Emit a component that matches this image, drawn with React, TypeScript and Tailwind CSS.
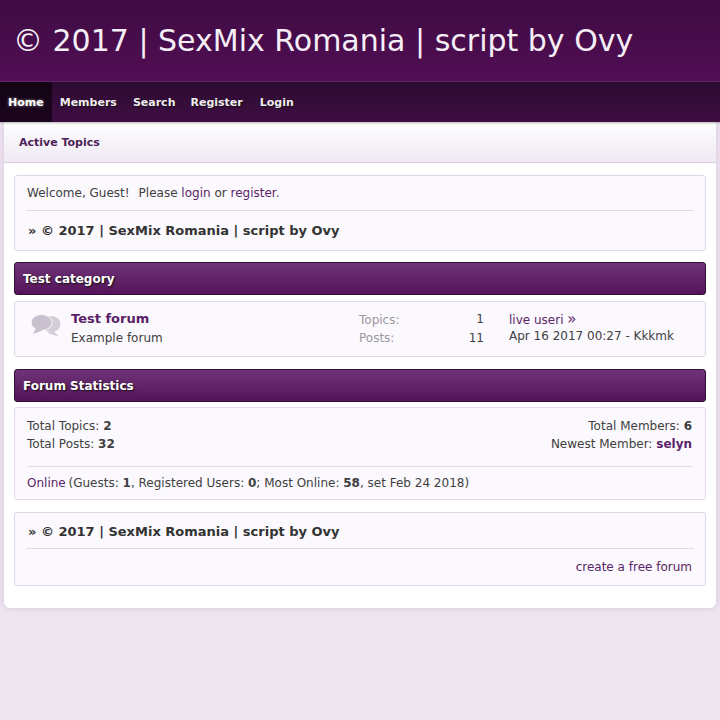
import React from "react";

const font = "[font-family:'DejaVu_Sans',sans-serif]";

function CatBar({ title, className }: { title: string; className: string }) {
  return (
    <div className={`mx-[10px] h-[33px] rounded-[3px] border border-[#2e0f38] bg-gradient-to-b from-[#6f3378] to-[#551358] px-2 flex items-center text-[12px] font-bold text-white [text-shadow:1px_1px_2px_#111] ${className}`}>
      {title}
    </div>
  );
}

function Bubbles() {
  return (
    <svg width="30" height="23" viewBox="0 0 30 23" className="block">
      <ellipse cx="20" cy="10" rx="9.500" ry="8" fill="#d5cdd8" />
      <path d="M22 16l5.500 6.500-11-3.500z" fill="#d5cdd8" />
      <ellipse cx="10.500" cy="8.500" rx="10.500" ry="8" fill="#cac1ce" stroke="#fbf9fd" strokeWidth="1" />
      <path d="M5 14l-3 6 9.500-3.500z" fill="#cac1ce" />
    </svg>
  );
}

export default function App() {
  return (
    <div className={`min-h-[720px] bg-[#efe5f1] text-[12px] text-[#404040] ${font}`}>
      <header className="h-[82px] border-b border-[#5f2a6b] bg-gradient-to-b from-[#3e0c42] to-[#520d55] pl-[13px] pt-[21px]">
        <h1 className="text-[30px] leading-[40px] font-normal text-[#f5eef6]">© 2017 | SexMix Romania | script by Ovy</h1>
      </header>
      <nav className="h-[40px] flex bg-gradient-to-b from-[#2c0a30] to-[#3f0e43] text-[11px] font-bold text-[#f1eaf2] shadow-[0_1px_2px_rgba(0,0,0,0.3)] relative [text-shadow:1px_1px_1px_#111]">
        <a className="px-2 pt-[2px] flex items-center bg-gradient-to-b from-[#120314] to-[#1d0520] text-white [text-shadow:0_0_3px_#999]">Home</a>
        <a className="px-2 pt-[2px] flex items-center">Members</a>
        <a className="px-2 pt-[2px] flex items-center">Search</a>
        <a className="pl-2 pr-[9px] -ml-[1px] pt-[2px] flex items-center">Register</a>
        <a className="px-2 pt-[2px] flex items-center">Login</a>
      </nav>
      <main className="mx-1 h-[486px] rounded-b-[6px] bg-white shadow-[0_0_6px_rgba(90,40,100,0.18)]">
        <div className="h-[41px] border-b border-[#dcd0e0] bg-gradient-to-b from-white to-[#efe9f3] pl-[15px] pt-[2px] flex items-center text-[11px] font-bold text-[#4b2358]">
          Active Topics
        </div>
        <section className="mx-[10px] mt-[12px] h-[76px] rounded-[3px] border border-[#e3d5e8] bg-[#fbf9fd] px-3 pt-[10px]">
          <p className="leading-[15px]">
            Welcome, Guest!<span className="ml-[9px]">Please</span> <a className="text-[#5a2466]">login</a> or <a className="text-[#5a2466]">register</a>.
          </p>
          <div className="mt-[9px] -mx-[1px] border-t border-[#e3d5e8] pt-[11px] pl-[2px] text-[13px] leading-[18px] font-bold text-[#333333]">» © 2017 | SexMix Romania | script by Ovy</div>
        </section>
        <CatBar title="Test category" className="mt-[11px]" />
        <section className="mx-[10px] mt-[6px] h-[56px] rounded-[3px] border border-[#e3d5e8] bg-[#fbf9fd] flex">
          <div className="w-[56px] pl-[16px] pt-[12px] shrink-0"><Bubbles /></div>
          <div className="w-[288px] pt-[8px] shrink-0">
            <div className="text-[13px] leading-[18px] font-bold text-[#5a1f68]">Test forum</div>
            <div className="mt-[1px] leading-[19px]">Example forum</div>
          </div>
          <div className="w-[125px] pt-[8px] shrink-0 leading-[19px]">
            <div className="flex justify-between text-[#9c96a0]"><span className="pt-[1px]">Topics:</span><span className="text-[#404040]">1</span></div>
            <div className="-mt-[1px] flex justify-between text-[#9c96a0]"><span>Posts:</span><span className="text-[#404040]">11</span></div>
          </div>
          <div className="pl-[25px] pt-[8px] leading-[18px]">
            <div className="h-[18px] text-[#5a2466]">live useri <span className="text-[15px]">»</span></div>
            <div className="-mt-[1px]">Apr 16 2017 00:27 - Kkkmk</div>
          </div>
        </section>
        <CatBar title="Forum Statistics" className="mt-[12px]" />
        <section className="mx-[10px] mt-[5px] h-[93px] rounded-[3px] border border-[#e8d8ec] bg-[#fbf9fd] px-3 pt-[9px]">
          <div className="flex justify-between leading-[18px] pr-[1px]">
            <div>
              <div>Total Topics: <b>2</b></div>
              <div>Total Posts: <b>32</b></div>
            </div>
            <div className="text-right">
              <div>Total Members: <b>6</b></div>
              <div>Newest Member: <b className="text-[#5a1f68]">selyn</b></div>
            </div>
          </div>
          <div className="mt-[13px] border-t border-[#e8d8ec] pt-[7px] leading-[18px]">
            <a className="text-[#5a2466]">Online</a><span className="-ml-[1px]"> (Guests: <b>1</b>, Registered Users: <b>0</b>; Most Online: <b>58</b>, set Feb 24 2018)</span>
          </div>
        </section>
        <section className="mx-[10px] mt-[12px] h-[74px] rounded-[3px] border border-[#e3d5e8] bg-[#fbf9fd] px-3 pt-[10px]">
          <div className="pl-[1px] text-[13px] leading-[18px] font-bold text-[#333333]">» © 2017 | SexMix Romania | script by Ovy</div>
          <div className="mt-[7px] -mx-[1px] border-t border-[#e3d5e8] pt-[9px] text-right pr-[2px] leading-[18px]">
            <a className="text-[#5a2466]">create a free forum</a>
          </div>
        </section>
      </main>
    </div>
  );
}
